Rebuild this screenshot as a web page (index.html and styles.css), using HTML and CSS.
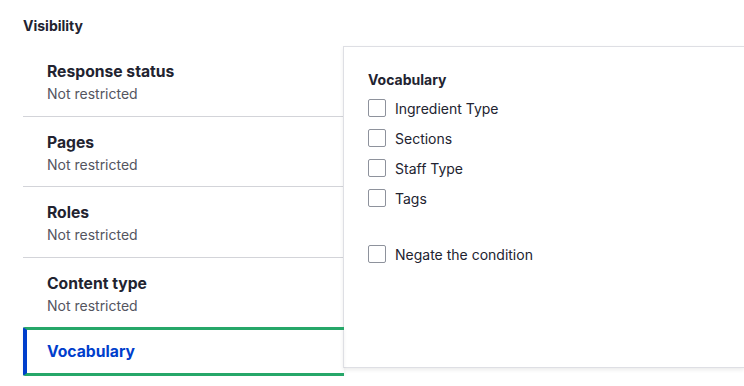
FILE: index.html
```html
<!DOCTYPE html>
<html lang="en">
<head>
    <meta charset="UTF-8">
    <meta name="viewport" content="width=device-width, initial-scale=1.0">
    <title>Visibility</title>
    <link rel="stylesheet" href="styles.css">
</head>
<body>
    <div class="visibility">
        <div class="visibility-label">Visibility</div>
        <div class="vertical-tabs">
            <ul class="tabs-menu">
                <li class="tab-item">
                    <a class="tab-link" href="#">
                        <strong class="tab-title">Response status</strong>
                        <span class="tab-summary">Not restricted</span>
                    </a>
                </li>
                <li class="tab-item">
                    <a class="tab-link" href="#">
                        <strong class="tab-title">Pages</strong>
                        <span class="tab-summary">Not restricted</span>
                    </a>
                </li>
                <li class="tab-item">
                    <a class="tab-link" href="#">
                        <strong class="tab-title">Roles</strong>
                        <span class="tab-summary">Not restricted</span>
                    </a>
                </li>
                <li class="tab-item">
                    <a class="tab-link" href="#">
                        <strong class="tab-title">Content type</strong>
                        <span class="tab-summary">Not restricted</span>
                    </a>
                </li>
                <li class="tab-item is-selected">
                    <a class="tab-link" href="#">
                        <strong class="tab-title">Vocabulary</strong>
                    </a>
                </li>
            </ul>
            <div class="tabs-pane">
                <div class="fieldset-legend">Vocabulary</div>
                <div class="checkboxes">
                    <label class="form-item"><input type="checkbox" class="form-checkbox"> Ingredient Type</label>
                    <label class="form-item"><input type="checkbox" class="form-checkbox"> Sections</label>
                    <label class="form-item"><input type="checkbox" class="form-checkbox"> Staff Type</label>
                    <label class="form-item"><input type="checkbox" class="form-checkbox"> Tags</label>
                </div>
                <label class="form-item negate"><input type="checkbox" class="form-checkbox"> Negate the condition</label>
            </div>
        </div>
    </div>
</body>
</html>
```

FILE: styles.css
```css
body {
    margin: 0;
    background-color: #ffffff;
    font-family: Inter, "Noto Sans", Arial, sans-serif;
    color: #222330;
}
.visibility {
    padding: 16px 0 0 23px;
}
.visibility-label {
    font-size: 14px;
    font-weight: 700;
    line-height: 20px;
    margin-bottom: 10px;
}
.vertical-tabs {
    display: flex;
    align-items: flex-start;
}
.tabs-menu {
    list-style: none;
    margin: 0;
    padding: 0;
    width: 321px;
    flex-shrink: 0;
}
.tab-item {
    border-bottom: 1px solid #d3d4d9;
}
.tab-link {
    display: flex;
    flex-direction: column;
    padding: 16px 24px 11.5px;
    text-decoration: none;
    color: #222330;
}
.tab-title {
    font-size: 15.7px;
    font-weight: 700;
    line-height: 20px;
}
.tab-summary {
    margin-top: 2px;
    font-size: 14px;
    line-height: 20px;
    color: #545560;
}
.tab-item.is-selected {
    position: relative;
    margin-top: -1px;
    border-top: 3px solid #26a769;
    border-bottom: 3px solid #26a769;
    border-left: 4px solid #003ecc;
    border-radius: 2px 0 0 2px;
    box-shadow: 0 2px 4px rgba(0, 0, 0, 0.06);
    z-index: 1;
}
.tab-item.is-selected .tab-link {
    padding: 12px 20px 11px;
}
.tab-item.is-selected .tab-title {
    color: #003ecc;
}
.tabs-pane {
    flex: 1;
    height: 322px;
    margin-left: -1px;
    padding: 23px 24px 0;
    border: 1px solid #dedfe4;
    border-right: none;
    box-shadow: 0 2px 4px rgba(0, 0, 0, 0.08);
    box-sizing: border-box;
    background-color: #ffffff;
}
.fieldset-legend {
    font-size: 14px;
    font-weight: 700;
    line-height: 20px;
    margin-bottom: 3px;
}
.form-item {
    display: flex;
    align-items: center;
    gap: 9px;
    height: 30px;
    font-size: 14px;
}
.negate {
    margin-top: 26px;
}
.form-checkbox {
    appearance: none;
    width: 18px;
    height: 18px;
    margin: 0;
    border: 1px solid #8e929c;
    border-radius: 2px;
    background-color: #ffffff;
}
```
